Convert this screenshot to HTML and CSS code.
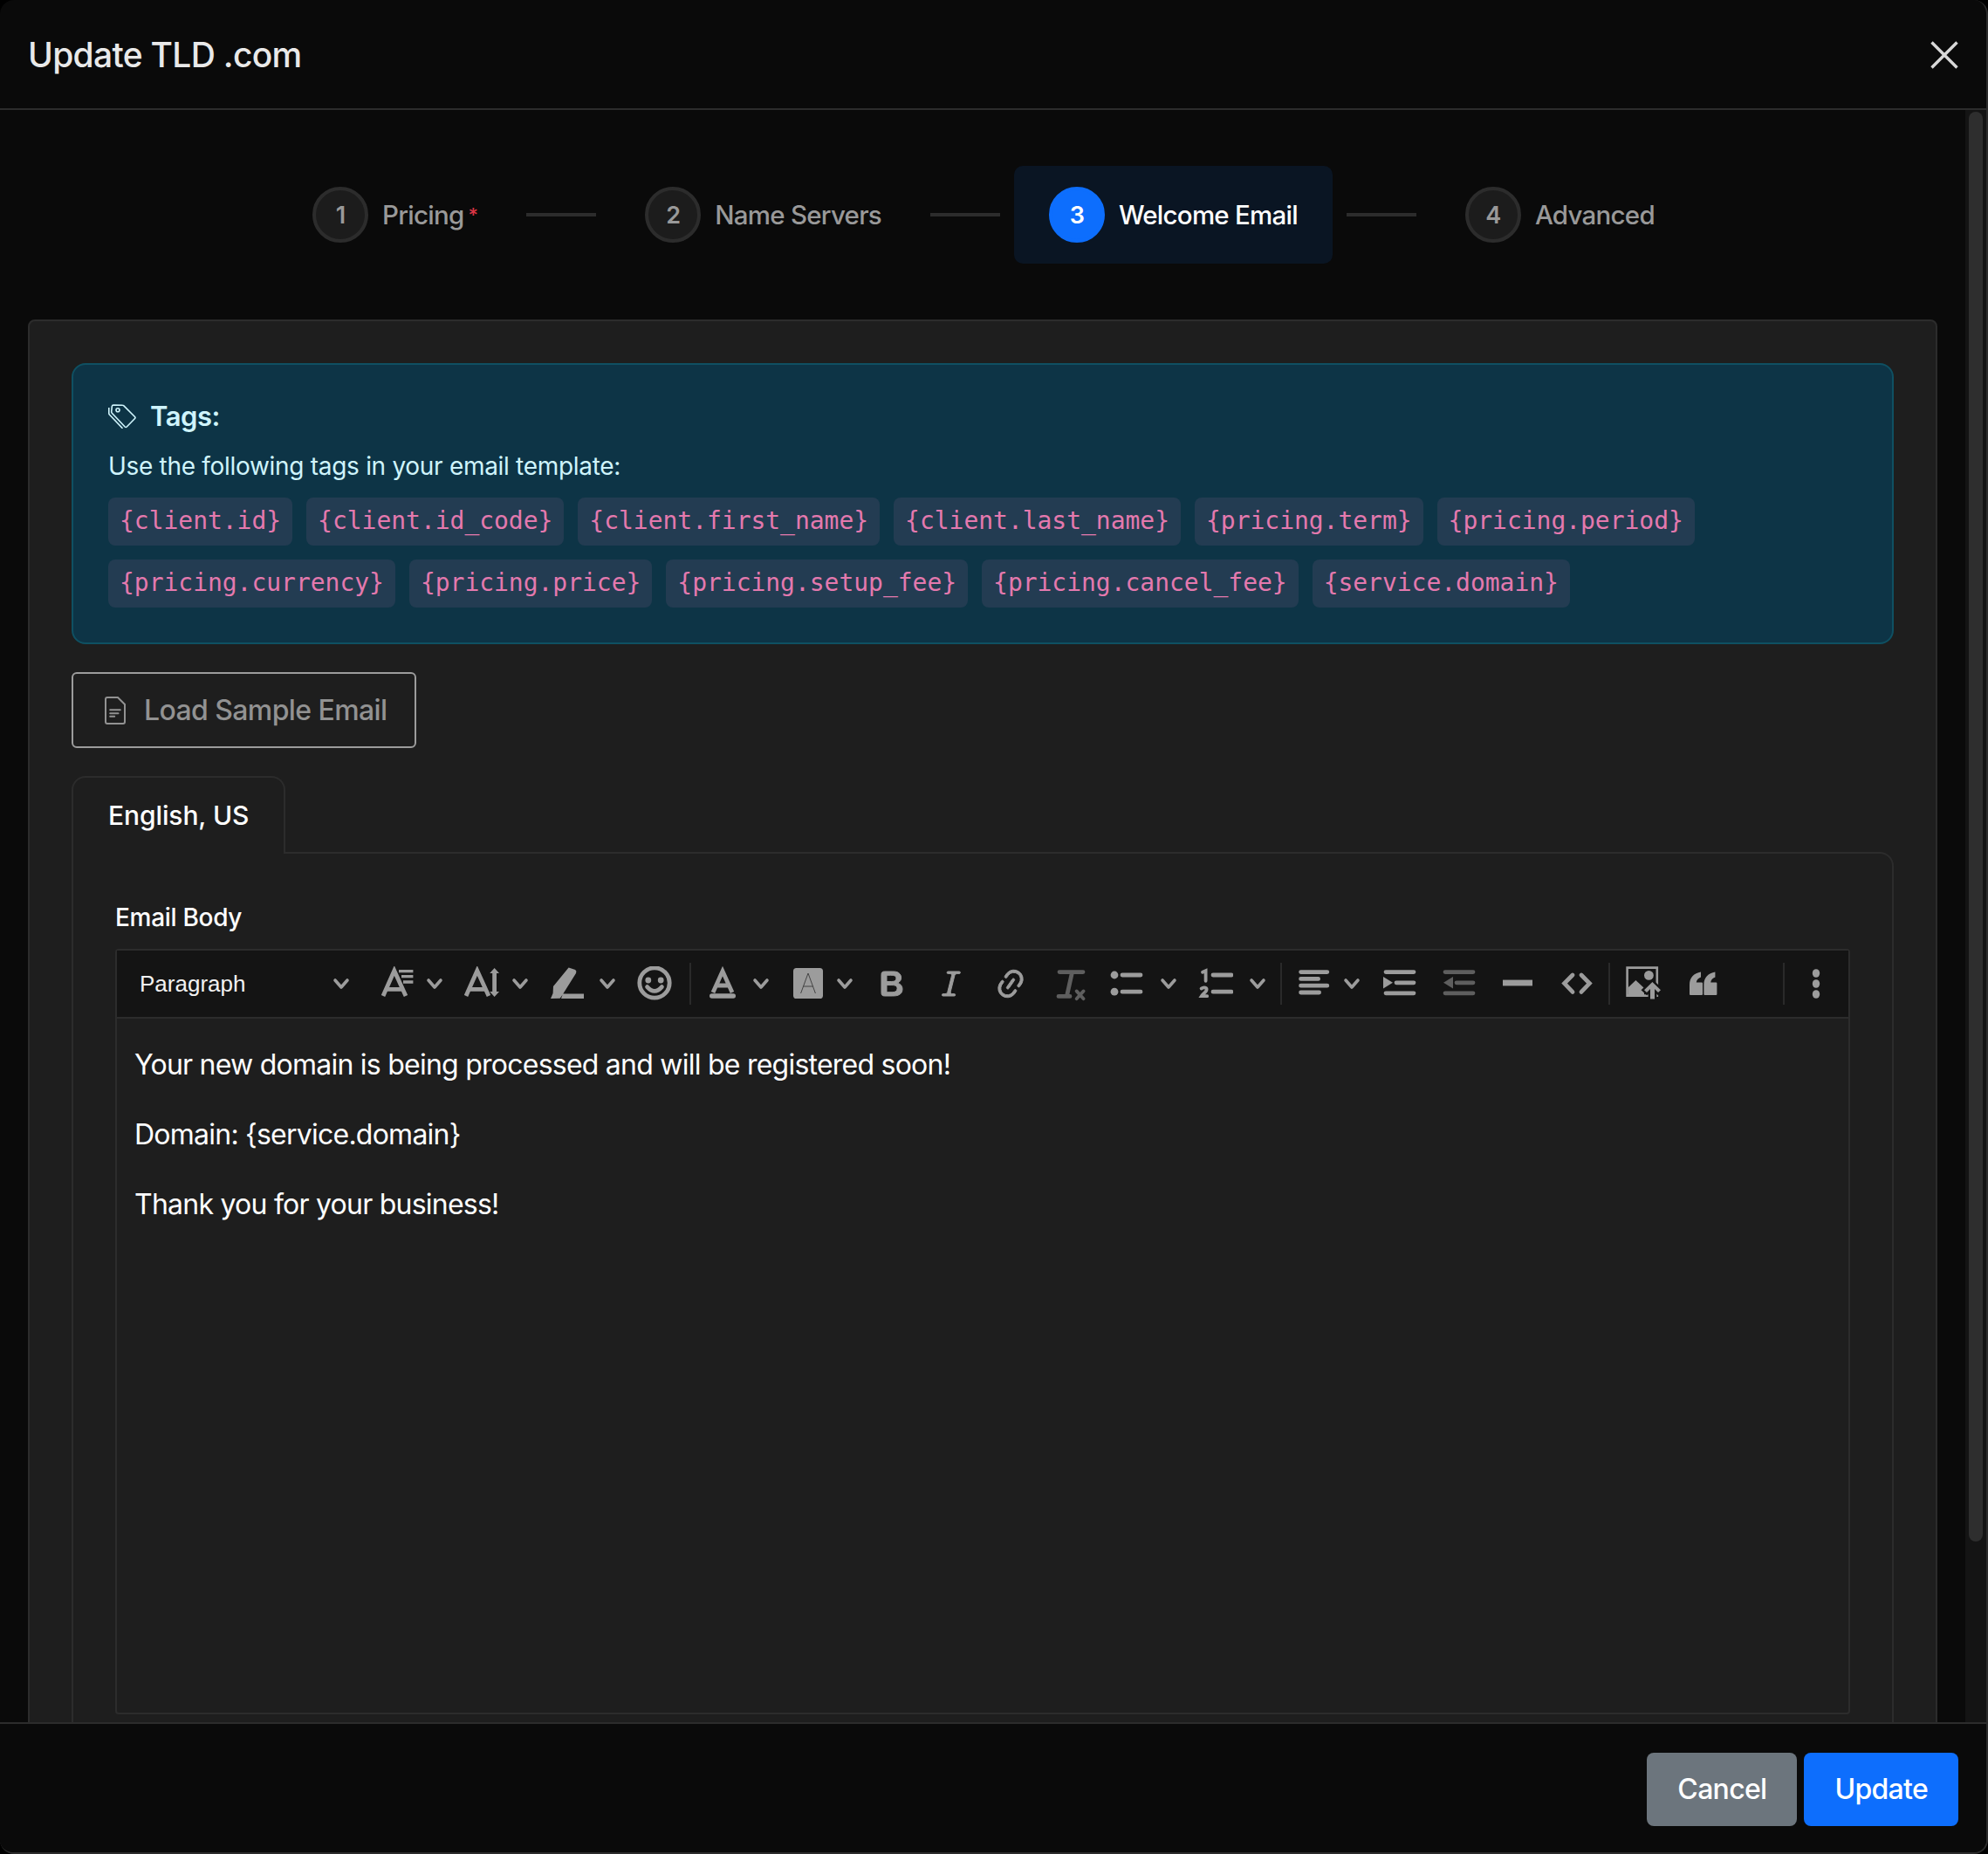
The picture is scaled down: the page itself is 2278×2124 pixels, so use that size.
FILE: index.html
```html
<!DOCTYPE html>
<html>
<head>
    <title>Update TLD .com</title>
    <meta charset="utf-8" />
    <link rel="stylesheet" href="styles.css">
</head>
<body>
    <div class="modal">
        <div class="modal-header">
            <h1 class="modal-title">Update TLD .com</h1>
            <svg class="modal-close" viewBox="0 0 32 32"><path d="M1.5 1.5l29 29M30.5 1.5l-29 29"/></svg>
        </div>

        <div class="modal-body">
            <div class="modal-scroll">
                <div class="stepper">
                    <div class="step"><span class="step-num">1</span><span class="step-label">Pricing</span><span class="step-req">*</span></div>
                    <span class="step-line"></span>
                    <div class="step"><span class="step-num">2</span><span class="step-label">Name Servers</span></div>
                    <span class="step-line"></span>
                    <div class="step step-active"><span class="step-num">3</span><span class="step-label">Welcome Email</span></div>
                    <span class="step-line"></span>
                    <div class="step"><span class="step-num">4</span><span class="step-label">Advanced</span></div>
                </div>

                <div class="card">
                    <div class="alert">
                        <div class="alert-title">
                            <svg class="tags-icon" viewBox="0 0 32 28"><path d="M6 1l10.500.3q.8 0 1.400.6L30.500 14.500q1 1 0 2L21.200 26q-1 1-2 0L4.500 10.500q-.8-.8-.8-1.600L4.300 2.700Q4.500 1 6 1z"/><circle cx="11" cy="6.700" r="2"/><path d="M.8 4v6.500q0 .9.600 1.500L16.500 27.800"/></svg>
                            Tags:
                        </div>
                        <p class="alert-text">Use the following tags in your email template:</p>
                        <div class="tag-list">
                            <code class="tag">{client.id}</code>
                            <code class="tag">{client.id_code}</code>
                            <code class="tag">{client.first_name}</code>
                            <code class="tag">{client.last_name}</code>
                            <code class="tag">{pricing.term}</code>
                            <code class="tag">{pricing.period}</code>
                            <code class="tag">{pricing.currency}</code>
                            <code class="tag">{pricing.price}</code>
                            <code class="tag">{pricing.setup_fee}</code>
                            <code class="tag">{pricing.cancel_fee}</code>
                            <code class="tag">{service.domain}</code>
                        </div>
                    </div>

                    <button class="btn-outline">
                        <svg class="doc-icon" viewBox="0 0 24 32"><path d="M3 1h12l8 8v20a2 2 0 0 1-2 2H3a2 2 0 0 1-2-2V3a2 2 0 0 1 2-2zM6.200 15.300h11.600M6.200 19.300h9.300M6.200 22.700h5"/></svg>
                        Load Sample Email
                    </button>

                    <div class="tab">English, US</div>
                    <div class="tab-pane">
                        <div class="field-label">Email Body</div>
                        <div class="editor">
                            <div class="toolbar">
                                <div class="tb-para">Paragraph<svg class="chev" viewBox="0 0 20 14"><path d="M3 3l7 8 7-8"/></svg></div>

                                <div class="tb-drop tb-drop-13">
                                    <svg class="ic ic-line ic-butt" viewBox="0 0 20 20"><path d="M2 17L8.400 2.500 15 17M4 13.200h8.800"/><path class="thin" d="M11 2.800h8.200M12.500 5.800h6.700M13.500 9h5.700"/></svg>
                                    <svg class="chev" viewBox="0 0 20 14"><path d="M3 3l7 8 7-8"/></svg>
                                </div>
                                <div class="tb-drop">
                                    <svg class="ic ic-line ic-butt" viewBox="0 0 20 20"><path d="M1 17L7.400 2.500 14 17M3 13.200h8.800"/><path d="M17.300 3v12.800"/><path class="solid" d="M17.300 1l2.700 3h-5.400zM17.300 17.500l2.700-3h-5.400z"/></svg>
                                    <svg class="chev" viewBox="0 0 20 14"><path d="M3 3l7 8 7-8"/></svg>
                                </div>
                                <div class="tb-drop tb-drop-16">
                                    <svg class="ic" viewBox="0 0 20 20"><path d="M10.800.7L14.600 2Q15.600 2.800 15 4L7 16.800 5.800 18.400.5 18.500 1.800 15.500 2 11.500zM7.500 15.800h12v2.700h-13z"/></svg>
                                    <svg class="chev" viewBox="0 0 20 14"><path d="M3 3l7 8 7-8"/></svg>
                                </div>
                                <svg class="ic ic-line" viewBox="0 0 20 20"><circle cx="10" cy="9.500" r="8.600"/><path d="M5.800 11.800Q10 16.500 14.200 11.800"/><circle class="solid" cx="6.400" cy="8" r="1.700"/><circle class="solid" cx="13.600" cy="8" r="1.700"/></svg>

                                <span class="tb-sep tb-sep-first"></span>

                                <div class="tb-drop">
                                    <svg class="ic ic-line ic-butt" viewBox="0 0 20 20"><path d="M4.500 15L10 2.800 15.500 15M6.400 11h7.200"/><rect class="solid" x="2.500" y="15.600" width="15" height="2.800" rx="1.400"/></svg>
                                    <svg class="chev" viewBox="0 0 20 14"><path d="M3 3l7 8 7-8"/></svg>
                                </div>
                                <div class="tb-drop tb-drop-12">
                                    <svg class="ic" viewBox="0 0 20 20"><rect x="1.500" y="1" width="17" height="17.500" rx="1.800"/><path class="hair" d="M5.800 15.500L10 4l4.200 11.500M7 11.500h6"/></svg>
                                    <svg class="chev" viewBox="0 0 20 14"><path d="M3 3l7 8 7-8"/></svg>
                                </div>

                                <svg class="ic ic-heavy" viewBox="0 0 20 20"><path d="M10.187 17H5.773c-.637 0-1.092-.138-1.364-.415-.273-.277-.409-.718-.409-1.323V4.738c0-.617.14-1.062.419-1.332.279-.27.73-.406 1.354-.406h4.680c.69 0 1.288.041 1.793.124.506.083.96.242 1.360.478.341.197.644.447.906.75a3.262 3.262 0 0 1 .808 2.162c0 1.401-.722 2.426-2.167 3.075C15.050 10.175 16 11.315 16 13.010a3.756 3.756 0 0 1-2.296 3.504 6.100 6.100 0 0 1-1.517.377c-.571.073-1.238.11-2 .11zm-.217-6.217H7v4.087h3.069c1.977 0 2.965-.69 2.965-2.072 0-.707-.256-1.220-.768-1.537-.512-.319-1.277-.478-2.296-.478zM7 5.130v3.619h2.606c.729 0 1.292-.067 1.690-.2a1.600 1.600 0 0 0 .91-.765c.165-.267.247-.566.247-.897 0-.707-.26-1.176-.778-1.409-.519-.232-1.310-.348-2.375-.348H7z"/></svg>
                                <svg class="ic ic-heavy" viewBox="0 0 20 20"><path d="M9.586 14.633l.021.004c-.036.335.095.655.393.962.082.083.173.15.274.201h1.474a.6.6 0 1 1 0 1.200H5.304a.6.6 0 0 1 0-1.200h1.150c.474-.07.809-.182 1.005-.334.157-.122.291-.32.404-.597l2.416-9.550a1.053 1.053 0 0 0-.281-.823 1.120 1.120 0 0 0-.442-.296H8.150a.6.6 0 0 1 0-1.200h6.443a.6.6 0 1 1 0 1.200h-1.195c-.376.056-.65.155-.823.296-.215.175-.423.439-.623.79l-2.366 9.347z"/></svg>
                                <svg class="ic ic-heavy" viewBox="0 0 20 20"><path d="M11.077 15l.991-1.416a.75.75 0 1 1 1.229.86l-1.148 1.640a.748.748 0 0 1-.217.206 5.251 5.251 0 0 1-8.503-5.955.741.741 0 0 1 .12-.274l1.147-1.639a.75.75 0 1 1 1.228.86L4.933 10.700l.006.003a3.750 3.750 0 0 0 6.132 4.294l.006.004zm5.494-5.335a.748.748 0 0 1-.12.274l-1.147 1.639a.75.75 0 1 1-1.228-.86l.86-1.230a3.750 3.750 0 0 0-6.144-4.301l-.86 1.229a.75.75 0 0 1-1.229-.86l1.148-1.640a.748.748 0 0 1 .217-.206 5.251 5.251 0 0 1 8.503 5.955zm-4.563-2.532a.75.75 0 0 1 .184 1.045l-3.155 4.505a.75.75 0 1 1-1.229-.86l3.155-4.506a.75.75 0 0 1 1.045-.184z"/></svg>
                                <svg class="ic ic-line ic-off" viewBox="0 0 20 20"><path d="M4 3.300h13.500M11.300 3.300L8.300 16.800M3.500 17.200h6.500"/><path class="mid" d="M13.800 14.200l4 4.400M17.800 14.200l-4 4.400"/></svg>

                                <div class="tb-drop tb-drop-19">
                                    <svg class="ic ic-line" viewBox="0 0 20 20"><circle class="solid" cx="3.500" cy="5" r="2.200"/><circle class="solid" cx="3.500" cy="14.600" r="2.200"/><path d="M8 5h10.500M8 14.600h10.500"/></svg>
                                    <svg class="chev" viewBox="0 0 20 14"><path d="M3 3l7 8 7-8"/></svg>
                                </div>
                                <div class="tb-drop tb-drop-18">
                                    <svg class="ic ic-line" viewBox="0 0 20 20"><path d="M8.500 5h10.500M8.500 14.600h10.500"/><path class="mid" d="M2.500 3.400l1.800-.8v5.800M1.800 12.800c1.500-1.200 3.400-.5 2.900 1-.3 1-2 2-2.800 3.300h3.200"/></svg>
                                    <svg class="chev" viewBox="0 0 20 14"><path d="M3 3l7 8 7-8"/></svg>
                                </div>

                                <span class="tb-sep"></span>

                                <div class="tb-drop">
                                    <svg class="ic ic-line" viewBox="0 0 20 20"><path d="M2.800 3.300h15.100M2.800 7.200h10M2.800 11.100h15.100M2.800 15h10.500"/></svg>
                                    <svg class="chev" viewBox="0 0 20 14"><path d="M3 3l7 8 7-8"/></svg>
                                </div>
                                <svg class="ic ic-line" viewBox="0 0 20 20"><path d="M2.500 3.300h16M8.500 9.400h10M2.500 15.400h16"/><path class="solid" d="M1 6l5.500 3.400L1 12.800z"/></svg>
                                <svg class="ic ic-line ic-off" viewBox="0 0 20 20"><path d="M2.500 3.300h16M9 9.400h9.500M2.500 15.400h16"/><path class="solid" d="M7 6L1.500 9.400 7 12.800z"/></svg>
                                <svg class="ic" viewBox="0 0 20 20"><rect x="1.500" y="7.800" width="17" height="3.400"/></svg>
                                <svg class="ic ic-line" viewBox="0 0 20 20"><path d="M7.500 5L2.800 9.800l4.700 4.900M12.500 5l4.700 4.800-4.700 4.900"/></svg>

                                <span class="tb-sep tb-sep-media"></span>

                                <svg class="ic" viewBox="0 0 20 20"><path class="frame" d="M.8.800h17.100v16H.8z"/><path d="M1.500 16.500V12L5.700 8l4.800 4.500v4z"/><circle cx="13.200" cy="5.200" r="2.700"/><path class="halo" d="M15.200 9L20 13.600 18.500 15l-2-2v5.700H14V13l-2 2-1.500-1.400z"/></svg>
                                <svg class="ic" viewBox="0 0 20 20"><path d="M3 16.500a.5.500 0 0 1-.5-.5V10.500C2.500 6.500 5 3.800 9 3.200V6.300C7.600 6.800 6.500 7.800 6.400 9.300H9.500a.5.500 0 0 1 .5.500V16a.5.500 0 0 1-.5.500zM11.200 16.500a.5.500 0 0 1-.5-.5V10.500c0-4 2.500-6.700 6.500-7.300V6.300c-1.400.5-2.500 1.500-2.600 3h3.100a.5.500 0 0 1 .5.500V16a.5.500 0 0 1-.5.500z"/></svg>

                                <span class="tb-sep tb-sep-end"></span>

                                <svg class="ic" viewBox="0 0 20 20"><ellipse cx="10" cy="4" rx="2.100" ry="2.400"/><ellipse cx="10" cy="10" rx="2.100" ry="2.400"/><ellipse cx="10" cy="16" rx="2.100" ry="2.400"/></svg>
                            </div>
                            <div class="editor-body">
                                <p>Your new domain is being processed and will be registered soon!</p>
                                <p>Domain: {service.domain}</p>
                                <p>Thank you for your business!</p>
                            </div>
                        </div>
                    </div>
                </div>
            </div>
            <div class="scrollbar"><div class="scrollbar-thumb"></div></div>
        </div>

        <div class="modal-footer">
            <button class="btn btn-gray">Cancel</button>
            <button class="btn btn-blue">Update</button>
        </div>
    </div>
</body>
</html>
```
FILE: styles.css
```css
* {
    box-sizing: border-box;
}

html, body {
    margin: 0;
    height: 100%;
    background: #000;
}

body {
    font-family: "Inter", "Liberation Sans", sans-serif;
    color: #fff;
    overflow: hidden;
}

.modal {
    display: flex;
    flex-direction: column;
    height: 2124px;
    width: 2278px;
    background: #0a0a0a;
    border-right: 2px solid #2c2c2c;
    border-bottom: 2px solid #2c2c2c;
    border-radius: 16px;
    overflow: hidden;
}

/* header */
.modal-header {
    display: flex;
    align-items: center;
    justify-content: space-between;
    flex: none;
    height: 126px;
    padding: 0 32px 0 32px;
    border-bottom: 2px solid #2c2c2c;
}

.modal-title {
    margin: 0;
    font-size: 39px;
    font-weight: 500;
    letter-spacing: -.7px;
    color: #e9e9e9;
}

.modal-close {
    width: 32px;
    height: 32px;
    margin-top: 2px;
    fill: none;
    stroke: #d8d8d8;
    stroke-width: 3.4;
}

/* body + fake scrollbar */
.modal-body {
    display: flex;
    flex: 1;
    min-height: 0;
}

.modal-scroll {
    flex: 1;
    min-width: 0;
    padding: 0 32px;
    overflow: hidden;
}

.scrollbar {
    flex: none;
    width: 24px;
    padding: 2px 4px 0;
    background: #141414;
}

.scrollbar-thumb {
    height: 1638px;
    border-radius: 8px;
    background: #2e2e2e;
}

/* steps */
.stepper {
    display: flex;
    align-items: center;
    justify-content: center;
    margin-top: 64px;
    padding-left: 2px;
}

.step {
    display: flex;
    align-items: center;
    height: 112px;
    padding: 0 40px;
    border-radius: 10px;
    color: #999;
    font-size: 29.5px;
    font-weight: 500;
    letter-spacing: -.75px;
}

.step-num {
    display: flex;
    align-items: center;
    justify-content: center;
    width: 64px;
    height: 64px;
    margin-right: 16px;
    border: 4px solid #2c2c2c;
    border-radius: 50%;
    background: #1c1c1c;
    font-size: 27px;
    font-weight: 600;
}

.step-req {
    margin-left: 5px;
    color: #dc3545;
    font-size: 22px;
    line-height: 1;
}

.step-line {
    flex: none;
    width: 80px;
    height: 4px;
    margin: 0 16px;
    background: #2c2c2c;
}

.step-active {
    background: #0a1523;
    color: #fff;
}

.step-active .step-num {
    border-color: #0d6efd;
    background: #0d6efd;
}

/* card */
.card {
    margin-top: 64px;
    padding: 48px 48px 0;
    height: 1700px;
    border: 2px solid #2c2c2c;
    border-radius: 8px;
    background: #1e1e1e;
}

.alert {
    padding: 40px 40px 40px;
    border: 2px solid #0f5062;
    border-radius: 16px;
    background: #0d3446;
    color: #cff4fc;
}

.alert-title {
    display: flex;
    align-items: center;
    gap: 16px;
    height: 37px;
    font-size: 31px;
    font-weight: 600;
    letter-spacing: -.5px;
}

.tags-icon {
    flex: none;
    width: 32px;
    height: 28px;
    fill: none;
    stroke: #cff4fc;
    stroke-width: 1.6;
}

.alert-text {
    margin: 18px 0 15px;
    font-size: 28px;
    line-height: 42px;
    letter-spacing: -.3px;
}

.tag-list {
    display: flex;
    flex-wrap: wrap;
    gap: 16px;
}

.tag {
    height: 55px;
    padding: 0 13px;
    border-radius: 8px;
    background: #233c52;
    color: #e479ae;
    font-family: "DejaVu Sans Mono", monospace;
    font-size: 28px;
    line-height: 54px;
    letter-spacing: -.03px;
}

.btn-outline {
    display: flex;
    align-items: center;
    gap: 21px;
    height: 87px;
    width: 395px;
    margin-top: 32px;
    padding: 0 0 0 36px;
    border: 2px solid #9c9c9c;
    border-radius: 6px;
    background: transparent;
    color: #929292;
    font-family: inherit;
    font-size: 32px;
    font-weight: 500;
    letter-spacing: -.6px;
}

.doc-icon {
    flex: none;
    width: 24px;
    height: 32px;
    fill: none;
    stroke: #929292;
    stroke-width: 2;
    stroke-linecap: round;
}

/* tab */
.tab {
    position: relative;
    display: flex;
    align-items: center;
    width: 245px;
    height: 89px;
    margin-top: 32px;
    margin-bottom: -2px;
    padding: 0 0 2px 40px;
    border: 2px solid #2c2c2c;
    border-bottom: none;
    border-radius: 16px 16px 0 0;
    background: #1e1e1e;
    font-size: 30px;
    font-weight: 500;
    letter-spacing: -.1px;
}

.tab-pane {
    height: 1100px;
    padding: 48px 48px 0;
    border: 2px solid #2c2c2c;
    border-radius: 0 16px 0 0;
}

.field-label {
    height: 61px;
    font-size: 28px;
    font-weight: 500;
    line-height: 50px;
    letter-spacing: -.3px;
}

/* editor */
.editor {
    height: 877px;
    border: 2px solid #2c2c2c;
    border-radius: 4px;
}

.toolbar {
    display: flex;
    align-items: center;
    gap: 24px;
    height: 78px;
    border-bottom: 2px solid #2c2c2c;
    background: #141414;
}

.tb-para {
    display: flex;
    align-items: center;
    justify-content: space-between;
    flex: none;
    width: 267px;
    margin-right: 10px;
    padding-left: 26px;
    font-family: "Liberation Sans", sans-serif;
    font-size: 26px;
    color: #f2f2f2;
}

.tb-drop {
    display: flex;
    align-items: center;
    flex: none;
    gap: 14px;
}

.tb-drop-12 { gap: 12px; }
.tb-drop-13 { gap: 13px; }
.tb-drop-16 { gap: 16px; }
.tb-drop-18 { gap: 18px; }
.tb-drop-19 { gap: 19px; }

.tb-sep {
    flex: none;
    width: 2px;
    height: 48px;
    margin: 0 -8px;
    background: #2a2a2a;
}

.tb-sep-first {
    margin-left: -4px;
}

.tb-sep-media {
    margin-right: -6px;
}

.tb-sep-end {
    margin-left: 48px;
}

.ic {
    flex: none;
    width: 40px;
    height: 40px;
    fill: #9c9c9c;
}

.ic + .ic {
    margin-left: 4px;
}

.ic-line {
    fill: none;
    stroke: #9c9c9c;
    stroke-width: 2.4;
    stroke-linecap: round;
}

.ic-butt {
    stroke-linecap: butt;
}

.ic-heavy {
    stroke: #9c9c9c;
    stroke-width: .5;
}

.ic .thin {
    stroke-width: 1.7;
}

.ic .mid {
    stroke-width: 1.9;
}

.ic .solid {
    fill: #9c9c9c;
    stroke: none;
}

.ic .hair {
    fill: none;
    stroke: #444;
    stroke-width: .5;
}

.ic .frame {
    fill: none;
    stroke: #9c9c9c;
    stroke-width: 1.3;
}

.ic .halo {
    stroke: #141414;
    stroke-width: 2.4;
    paint-order: stroke;
}

.ic-off {
    stroke: #5e5e5e;
}

.ic-off .solid {
    fill: #5e5e5e;
}

.chev {
    flex: none;
    width: 20px;
    height: 14px;
    fill: none;
    stroke: #9c9c9c;
    stroke-width: 3.6;
    stroke-linecap: round;
    stroke-linejoin: round;
}

.editor-body {
    padding: 29px 20px;
    font-size: 32px;
    line-height: 48px;
    letter-spacing: -.76px;
}

.editor-body p {
    margin: 0 0 32px;
}

/* footer */
.modal-footer {
    display: flex;
    align-items: center;
    justify-content: flex-end;
    flex: none;
    gap: 8px;
    height: 149px;
    padding: 2px 32px 0 0;
    border-top: 2px solid #2c2c2c;
    background: #0a0a0a;
}

.btn {
    height: 84px;
    padding: 0 35px;
    border: none;
    border-radius: 8px;
    color: #fff;
    font-family: inherit;
    font-size: 32px;
    font-weight: 500;
    letter-spacing: -.7px;
}

.btn-gray {
    background: #6c757d;
}

.btn-blue {
    background: #0d6efd;
}
```
